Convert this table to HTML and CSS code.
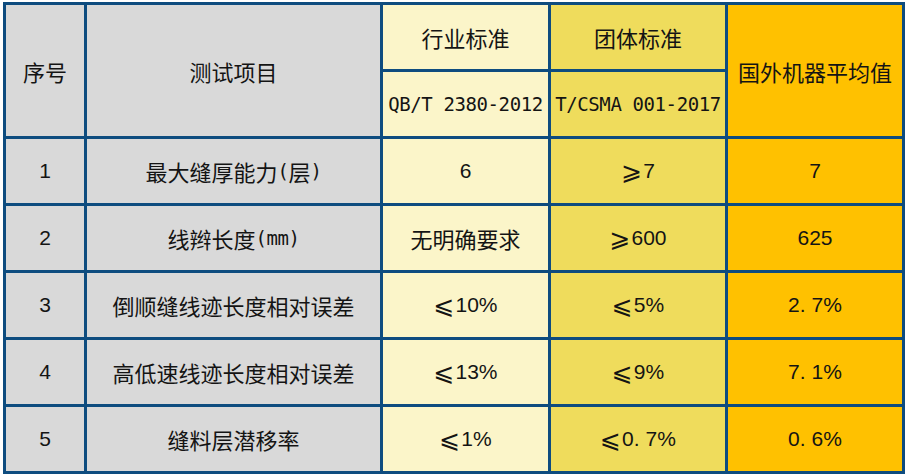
FILE: index.html
```html
<!DOCTYPE html>
<html lang="zh-CN">
<head>
<meta charset="utf-8">
<title>测试项目对比</title>
<link rel="stylesheet" href="styles.css">
</head>
<body>
<div class="table">
  <div class="cell grey span2">序号</div>
  <div class="cell grey span2">测试项目</div>
  <div class="cell light">行业标准</div>
  <div class="cell mid">团体标准</div>
  <div class="cell gold span2">国外机器平均值</div>
  <div class="cell light code">QB/T 2380-2012</div>
  <div class="cell mid code">T/CSMA 001-2017</div>

  <div class="cell grey num">1</div>
  <div class="cell grey">最大缝厚能力<span class="code">(</span>层<span class="code">)</span></div>
  <div class="cell light num">6</div>
  <div class="cell mid num"><span class="sym">⩾</span>7</div>
  <div class="cell gold num">7</div>

  <div class="cell grey num">2</div>
  <div class="cell grey">线辫长度<span class="code">(mm)</span></div>
  <div class="cell light">无明确要求</div>
  <div class="cell mid num"><span class="sym">⩾</span>600</div>
  <div class="cell gold num">625</div>

  <div class="cell grey num">3</div>
  <div class="cell grey">倒顺缝线迹长度相对误差</div>
  <div class="cell light num"><span class="sym">⩽</span>10%</div>
  <div class="cell mid num"><span class="sym">⩽</span>5%</div>
  <div class="cell gold num">2.<span class="gap"></span>7%</div>

  <div class="cell grey num">4</div>
  <div class="cell grey">高低速线迹长度相对误差</div>
  <div class="cell light num"><span class="sym">⩽</span>13%</div>
  <div class="cell mid num"><span class="sym">⩽</span>9%</div>
  <div class="cell gold num">7.<span class="gap"></span>1%</div>

  <div class="cell grey num">5</div>
  <div class="cell grey">缝料层潜移率</div>
  <div class="cell light num"><span class="sym">⩽</span>1%</div>
  <div class="cell mid num"><span class="sym">⩽</span>0.<span class="gap"></span>7%</div>
  <div class="cell gold num">0.<span class="gap"></span>6%</div>
</div>
</body>
</html>
```

FILE: styles.css
```css
html, body {
  margin: 0;
  padding: 0;
  background: #ffffff;
}

body {
  padding: 2px 0 0 3px;
}

.table {
  display: grid;
  grid-template-columns: 78px 293px 165px 174px 174px;
  grid-template-rows: repeat(7, 64px);
  gap: 3px;
  padding: 3px;
  width: max-content;
  background: #0e4c7f;
}

.cell {
  display: flex;
  align-items: center;
  justify-content: center;
  font-family: "Noto Sans CJK SC", "Noto Sans", sans-serif;
  font-size: 22px;
  font-weight: 400;
  color: #141414;
  white-space: nowrap;
}

.span2 {
  grid-row: span 2;
}

.grey {
  background: #d9d9d9;
}

.light {
  background: #fbf5c9;
}

.mid {
  background: #efdc5c;
}

.gold {
  background: #ffc100;
}

.code {
  font-family: "DejaVu Sans Mono", "Liberation Mono", monospace;
  font-size: 19px;
  letter-spacing: -0.4px;
}

.num {
  font-family: "Liberation Sans", "Noto Sans CJK SC", sans-serif;
  font-size: 21px;
}

.sym {
  font-family: "DejaVu Sans", sans-serif;
  font-size: 25px;
  line-height: 1;
  margin-right: 1px;
}

.gap {
  display: inline-block;
  width: 6px;
}
```
